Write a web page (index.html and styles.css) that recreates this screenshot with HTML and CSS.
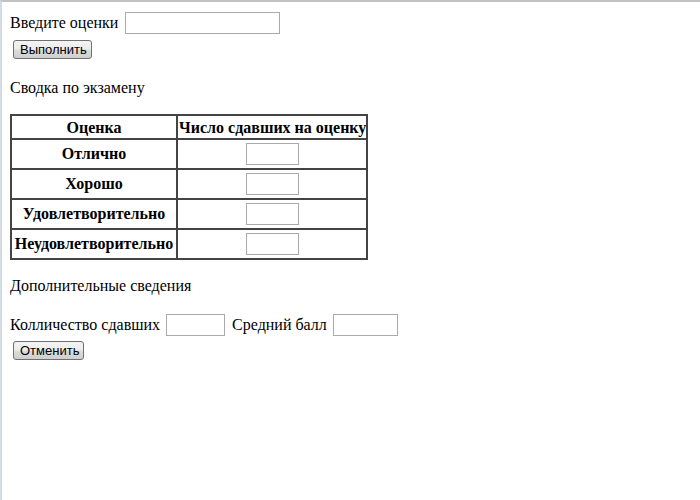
FILE: index.html
```html
<!DOCTYPE html>
<html lang="ru">
<head>
<meta charset="utf-8">
<title>Сводка по экзамену</title>
<link rel="stylesheet" href="styles.css">
</head>
<body>
<div class="page">
  <div class="row row-first">
    <span class="label">Введите оценки</span>
    <input class="field field-grades" type="text">
  </div>
  <div class="btn-row"><button class="btn btn-run" type="button">Выполнить</button></div>

  <p class="para para-summary">Сводка по экзамену</p>

  <table class="grades">
    <tr>
      <th class="col-grade">Оценка</th>
      <th class="col-count">Число сдавших на оценку</th>
    </tr>
    <tr>
      <th class="col-grade">Отлично</th>
      <td class="col-count"><input class="field field-cell" type="text"></td>
    </tr>
    <tr>
      <th class="col-grade">Хорошо</th>
      <td class="col-count"><input class="field field-cell" type="text"></td>
    </tr>
    <tr>
      <th class="col-grade">Удовлетворительно</th>
      <td class="col-count"><input class="field field-cell" type="text"></td>
    </tr>
    <tr>
      <th class="col-grade">Неудовлетворительно</th>
      <td class="col-count"><input class="field field-cell" type="text"></td>
    </tr>
  </table>

  <p class="para para-extra">Дополнительные сведения</p>

  <div class="row row-stats">
    <span class="label">Колличество сдавших</span>
    <input class="field field-count" type="text">
    <span class="label label-avg">Средний балл</span>
    <input class="field field-avg" type="text">
  </div>
  <div class="btn-row btn-row-cancel"><button class="btn btn-cancel" type="button">Отменить</button></div>
</div>
</body>
</html>
```

FILE: styles.css
```css
html {
  margin: 0;
  padding: 0;
  background: #ffffff;
  border-top: 2px solid #c2c2c2;
  border-left: 2px solid #d4dbe7;
  min-height: 100%;
  box-sizing: border-box;
}

body {
  margin: 0;
  padding: 10px 0 0 8px;
  font-family: "Liberation Serif", "Times New Roman", serif;
  font-size: 16px;
  color: #000000;
}

.page {
  display: flex;
  flex-direction: column;
  align-items: flex-start;
}

.row {
  display: flex;
  align-items: center;
  height: 22px;
}

.label {
  line-height: 18px;
  white-space: nowrap;
}

.field {
  box-sizing: border-box;
  height: 22px;
  border: 1px solid #aaaaaa;
  background: #ffffff;
  padding: 0 2px;
  margin: 0;
  font-family: "Liberation Sans", Arial, sans-serif;
  font-size: 13px;
  outline: none;
}

.field-grades {
  width: 155px;
  margin-left: 7px;
}

.btn-row {
  margin-top: 6px;
  padding-left: 3px;
}

.btn {
  box-sizing: border-box;
  height: 19px;
  padding: 0 6px;
  margin: 0;
  border: 1px solid #707070;
  border-radius: 3px;
  background: linear-gradient(to bottom, #f4f4f4 0%, #ececec 45%, #dcdcdc 55%, #cfcfcf 100%);
  font-family: "Liberation Sans", Arial, sans-serif;
  font-size: 13px;
  line-height: 17px;
  color: #000000;
}

.btn-run {
  width: 79px;
}

.btn-cancel {
  width: 71px;
}

.para {
  margin: 0;
  line-height: 18px;
}

.para-summary {
  margin-top: 20px;
}

.grades {
  margin-top: 17px;
  border-collapse: collapse;
  table-layout: fixed;
  width: 356px;
}

.grades th,
.grades td {
  border: 2px solid #444444;
  padding: 3px 1px;
  text-align: center;
  vertical-align: middle;
  white-space: nowrap;
}

.grades th {
  font-weight: bold;
  line-height: 22px;
}

.grades tr:first-child th {
  padding: 2px 1px 1px;
  line-height: 19px;
}

.col-grade {
  width: 162px;
}

.col-count {
  width: 186px;
}

.field-cell {
  width: 53px;
  display: block;
  margin: 0 auto;
}

.para-extra {
  margin-top: 17px;
}

.row-stats {
  margin-top: 19px;
}

.field-count {
  width: 59px;
  margin-left: 6px;
}

.label-avg {
  margin-left: 7px;
}

.field-avg {
  width: 65px;
  margin-left: 6px;
}

.btn-row-cancel {
  margin-top: 5px;
}
```
